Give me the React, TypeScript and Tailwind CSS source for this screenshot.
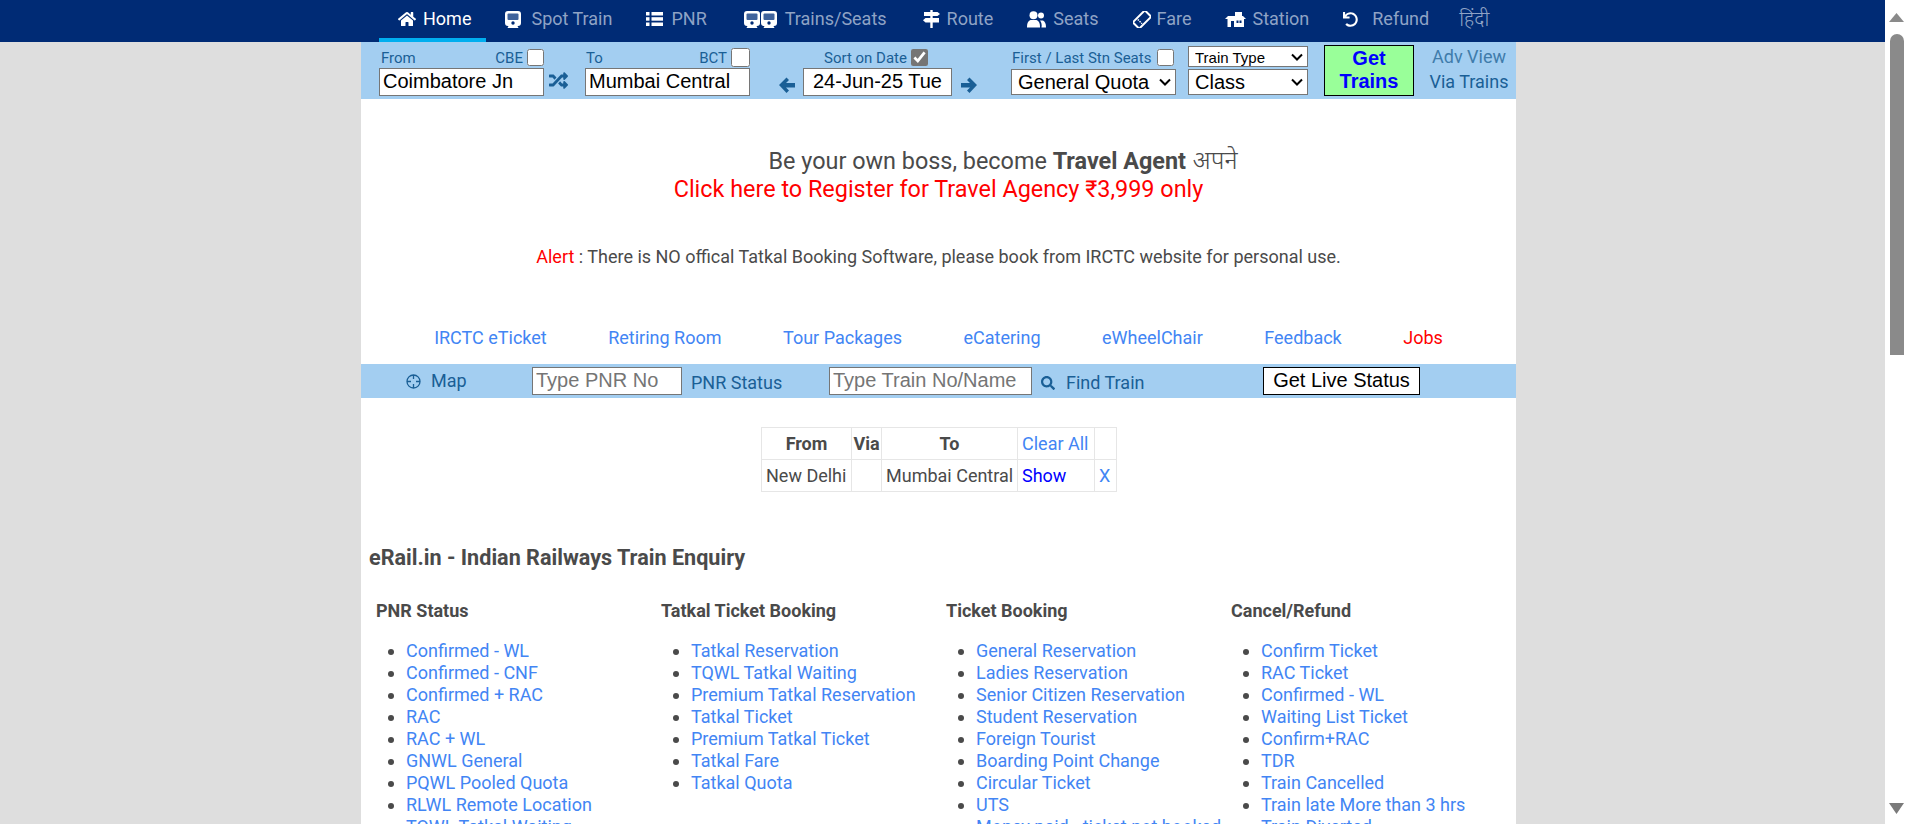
import React from "react";
import { FaHome, FaRandom, FaSearch, FaUndo } from "react-icons/fa";

const roboto = "font-['Roboto',sans-serif]";
const arial = "font-['Liberation_Sans',Arial,sans-serif]";
const hindi = "font-['Noto_Sans','DejaVu_Sans',sans-serif]";
const navBlue = "#002b75";

function TrainIcon() {
  return (
    <svg width="16" height="17" viewBox="0 0 16 17" fill="white">
      <path d="M3 0H13a3 3 0 0 1 3 3V12a3 3 0 0 1-3 3H12.5l1 2H2.5l1-2H3a3 3 0 0 1-3-3V3a3 3 0 0 1 3-3z" />
      <rect x="2.5" y="2.5" width="11" height="6.5" rx="1" fill="#3f639c" />
      <circle cx="8" cy="12" r="1.7" fill={navBlue} />
    </svg>
  );
}

function ListIcon() {
  return (
    <svg width="17" height="14" viewBox="0 0 17 14" fill="white">
      <rect width="3.5" height="3.5" />
      <rect x="5.5" width="11.5" height="3.5" />
      <rect y="5.2" width="3.5" height="3.5" />
      <rect x="5.5" y="5.2" width="11.5" height="3.5" />
      <rect y="10.5" width="3.5" height="3.5" />
      <rect x="5.5" y="10.5" width="11.5" height="3.5" />
    </svg>
  );
}

function RouteIcon() {
  return (
    <svg width="17" height="18" viewBox="0 0 17 18" fill="white">
      <rect x="7.3" width="2.4" height="18" />
      <path d="M1 2H14.5L17 4L14.5 6H1z" />
      <path d="M2.5 8H16V12.5H2.5L0 10.2z" />
    </svg>
  );
}

function SeatsIcon() {
  return (
    <svg width="19" height="17" viewBox="0 0 19 17" fill="white">
      <circle cx="6.5" cy="4.2" r="4" />
      <path d="M0 16.5c0-4.5 1-6.5 3.5-7.5h6c2.5 1 3.5 3 3.5 7.5z" />
      <circle cx="14" cy="4.6" r="3" />
      <path d="M14.5 16.5H19c0-4-1-6-3-7h-3c1.5 2 2 4 1.500 7z" />
    </svg>
  );
}

function TicketIcon() {
  return (
    <svg width="18" height="17" viewBox="0 0 18 17" fill="none" stroke="white">
      <g transform="rotate(-45 9 8.5)">
        <rect x="0.5" y="4" width="17" height="9" rx="1" strokeWidth="2" />
        <path d="M6 5.500V11.500" strokeWidth="1.500" strokeDasharray="1.500 1" />
      </g>
    </svg>
  );
}

function StationIcon() {
  return (
    <svg width="21" height="15" viewBox="0 0 21 15" fill="white">
      <rect x="10" width="7" height="4" />
      <path d="M3 4H18L21 7H0z" />
      <rect x="2.5" y="7" width="16.500" height="8" />
      <rect x="6" y="9" width="3" height="6" fill={navBlue} />
      <rect x="11.500" y="8.500" width="2" height="2.500" fill={navBlue} />
      <rect x="14.500" y="8.500" width="2" height="2.500" fill={navBlue} />
    </svg>
  );
}

function ArrowLeft() {
  return (
    <svg width="16" height="16" viewBox="0 0 16 16" fill="currentColor">
      <path d="M0 8L7.500 0.500L10 3L7 6H16V10.500H7L10 13.500L7.500 16z" />
    </svg>
  );
}

function ArrowRight() {
  return (
    <svg width="16" height="16" viewBox="0 0 16 16" fill="currentColor">
      <path d="M16 8L8.500 0.500L6 3L9 6H0V10.500H9L6 13.500L8.500 16z" />
    </svg>
  );
}

function MapIcon() {
  return (
    <svg width="15" height="15" viewBox="0 0 15 15" fill="none" stroke="currentColor" strokeWidth="1.300">
      <circle cx="7.500" cy="7.500" r="6.500" />
      <path d="M7.500 1V5M7.500 10V14M1 7.500H5M10 7.500H14" />
    </svg>
  );
}

const navItems: { label: string; icon: React.ReactNode; cls: string; active?: boolean }[] = [
  { label: "Home", icon: <FaHome size={18} />, cls: "gap-[7px] pr-[15px]", active: true },
  { label: "Spot Train", icon: <TrainIcon />, cls: "gap-[10px] pr-[15px]" },
  { label: "PNR", icon: <ListIcon />, cls: "gap-[8px] pr-[18px]" },
  {
    label: "Trains/Seats",
    icon: (
      <span className="flex gap-[1px]">
        <TrainIcon />
        <TrainIcon />
      </span>
    ),
    cls: "gap-[8px] pr-[17px]",
  },
  { label: "Route", icon: <RouteIcon />, cls: "gap-[7px] pr-[15px]" },
  { label: "Seats", icon: <SeatsIcon />, cls: "gap-[7px] pr-[15px]" },
  { label: "Fare", icon: <TicketIcon />, cls: "gap-[6px] pr-[15px]" },
  { label: "Station", icon: <StationIcon />, cls: "gap-[6px] pr-[15px]" },
  { label: "Refund", icon: <FaUndo size={15} />, cls: "gap-[14px] pr-[15px]" },
];

const topLinks = ["IRCTC eTicket", "Retiring Room", "Tour Packages", "eCatering", "eWheelChair", "Feedback"];

const columns = [
  {
    title: "PNR Status",
    items: ["Confirmed - WL", "Confirmed - CNF", "Confirmed + RAC", "RAC", "RAC + WL", "GNWL General", "PQWL Pooled Quota", "RLWL Remote Location", "TQWL Tatkal Waiting"],
  },
  {
    title: "Tatkal Ticket Booking",
    items: ["Tatkal Reservation", "TQWL Tatkal Waiting", "Premium Tatkal Reservation", "Tatkal Ticket", "Premium Tatkal Ticket", "Tatkal Fare", "Tatkal Quota"],
  },
  {
    title: "Ticket Booking",
    items: ["General Reservation", "Ladies Reservation", "Senior Citizen Reservation", "Student Reservation", "Foreign Tourist", "Boarding Point Change", "Circular Ticket", "UTS", "Money paid - ticket not booked"],
  },
  {
    title: "Cancel/Refund",
    items: ["Confirm Ticket", "RAC Ticket", "Confirmed - WL", "Waiting List Ticket", "Confirm+RAC", "TDR", "Train Cancelled", "Train late More than 3 hrs", "Train Diverted"],
  },
];

function Check({ checked, big }: { checked?: boolean; big?: boolean }) {
  return (
    <input
      type="checkbox"
      defaultChecked={checked}
      className={`${big ? "w-[19px] h-[19px]" : "w-[17px] h-[17px]"} m-0 shrink-0 accent-[#757575]`}
    />
  );
}

function Select({ label, cls }: { label: string; cls: string }) {
  return (
    <div className={`relative ${cls}`}>
      <select className={`${arial} block w-full h-full appearance-none bg-white border border-[#767676] rounded-none pl-[6px] text-black`}>
        <option>{label}</option>
      </select>
      <svg width="12" height="8" viewBox="0 0 12 8" fill="none" stroke="black" strokeWidth="2" className="absolute right-[5px] top-1/2 -translate-y-1/2 pointer-events-none">
        <path d="M1 1.500L6 6.500L11 1.500" />
      </svg>
    </div>
  );
}

export default function App() {
  return (
    <div className={`flex h-[824px] overflow-hidden bg-[#dedede] ${roboto} text-[18px] leading-[22px] text-[#4a4a4a]`}>
      <div className="w-[1885px] shrink-0 flex flex-col items-start">
        <nav className="w-full h-[42px] shrink-0 bg-[#002b75] flex pl-[379px] text-[#8fa3c5]">
          {navItems.map((n) => (
            <div
              key={n.label}
              className={`h-[42px] shrink-0 flex items-center pl-[19px] ${n.cls} ${
                n.active ? "text-white border-b-[4px] border-[#00aeef]" : "border-b-[4px] border-transparent"
              }`}
            >
              <span className="text-white flex">{n.icon}</span>
              <span>{n.label}</span>
            </div>
          ))}
          <div className={`h-[38px] pl-[15px] flex items-center text-[20px] font-light ${hindi}`}>हिंदी</div>
        </nav>

        <main className="ml-[361px] w-[1155px] shrink-0 bg-white">
          <form className="h-[57px] bg-[#a3cef1] flex pl-[18px] text-[15px] text-[#1a5f96]">
            <div className="w-[165px] pt-[5px]">
              <div className="h-[21px] flex items-center justify-between pl-[2px]">
                <span>From</span>
                <span className="flex items-center gap-[4px]">CBE <Check /></span>
              </div>
              <input readOnly value="Coimbatore Jn" className={`${arial} w-[165px] h-[28px] pb-[2px] bg-white border border-[#767676] text-black text-[20px] px-[3px]`} />
            </div>
            <div className="w-[41px] pt-[29px] pl-[5px]"><FaRandom size={19} /></div>
            <div className="w-[165px] pt-[5px]">
              <div className="h-[21px] flex items-center justify-between pl-[1px]">
                <span>To</span>
                <span className="flex items-center gap-[4px]">BCT <Check big /></span>
              </div>
              <input readOnly value="Mumbai Central" className={`${arial} w-[165px] h-[28px] pb-[2px] bg-white border border-[#767676] text-black text-[20px] px-[3px]`} />
            </div>
            <div className="w-[53px] pt-[35px] pl-[29px]"><ArrowLeft /></div>
            <div className="w-[149px] pt-[5px]">
              <div className="h-[21px] flex items-center justify-center gap-[4px] pr-[3px] whitespace-nowrap">Sort on Date <Check checked /></div>
              <input readOnly value="24-Jun-25 Tue" className={`${arial} w-[149px] h-[28px] pb-[2px] bg-white border border-[#767676] text-black text-[20px] text-center`} />
            </div>
            <div className="w-[59px] pt-[35px] pl-[9px]"><ArrowRight /></div>
            <div className="w-[177px] pt-[5px]">
              <div className="h-[21px] flex items-center gap-[6px] pl-[1px] w-[165px] whitespace-nowrap">
                <span>First / Last Stn Seats</span>
                <Check />
              </div>
              <Select label="General Quota" cls="mt-[1px] w-[165px] h-[26px] text-[20px]" />
            </div>
            <div className="w-[136px] pt-[4px]">
              <Select label="Train Type" cls="w-[120px] h-[21px] text-[15px]" />
              <Select label="Class" cls="mt-[2px] w-[120px] h-[26px] text-[20px]" />
            </div>
            <div className="w-[90px] pt-[3px]">
              <button type="button" className={`${arial} w-[90px] h-[51px] pb-[2px] bg-[#99ff99] border border-black text-[#0000ff] font-bold text-[20px] leading-[23px]`}>
                Get<br />Trains
              </button>
            </div>
            <div className="flex-1 flex flex-col items-center pl-[8px] pt-[2px] text-[18px] leading-[25px] whitespace-nowrap">
              <span className="text-[#3f7cab]">Adv View</span>
              <span>Via Trains</span>
            </div>
          </form>

          <div className="h-[265px] flex flex-col">
            <div className="pt-[46px] text-[23.4px] leading-[28px] text-center">
              <div className="pl-[129px] h-[30px]">
                Be your own boss, become <b>Travel Agent</b> <span className={`${hindi} font-light text-[25px] ml-[1px]`}>अपने</span>
              </div>
              <div className="text-[#ff0000]">Click here to Register for Travel Agency ₹3,999 only</div>
            </div>
            <p className="mt-[43px] text-center">
              <span className="text-[#ff0000]">Alert</span> : There is NO offical Tatkal Booking Software, please book from IRCTC website for personal use.
            </p>
            <div className="mt-[59px] flex justify-center gap-[61.5px] text-[#4285f4]">
              {topLinks.map((l) => (
                <span key={l}>{l}</span>
              ))}
              <span className="text-[#ff0000]">Jobs</span>
            </div>
          </div>

          <div className="h-[34px] bg-[#a3cef1] flex items-center pl-[45px] text-[#1a5f96]">
            <MapIcon />
            <span className="ml-[10px] w-[101px]">Map</span>
            <input placeholder="Type PNR No" className={`${arial} w-[150px] h-[28px] pb-[2px] bg-white border border-[#767676] text-[20px] px-[3px] placeholder:text-[#757575]`} />
            <span className="ml-[9px] w-[138px] pt-[4px]">PNR Status</span>
            <input placeholder="Type Train No/Name" className={`${arial} w-[203px] h-[28px] pb-[2px] bg-white border border-[#767676] text-[20px] px-[3px] placeholder:text-[#757575]`} />
            <FaSearch size={14} className="ml-[9px] mt-[4px]" />
            <span className="ml-[11px] w-[197px] pt-[4px]">Find Train</span>
            <button type="button" className={`${arial} w-[157px] h-[28px] pb-[2px] bg-white border border-black text-black text-[20px]`}>Get Live Status</button>
          </div>

          <table className="mt-[29px] ml-[400px] border-collapse w-[355px] table-fixed">
            <tbody>
              <tr className="h-[32px] font-bold text-center">
                <td className="border border-[#e6e6e6] w-[90px]">From</td>
                <td className="border border-[#e6e6e6] w-[30px]">Via</td>
                <td className="border border-[#e6e6e6] w-[136px]">To</td>
                <td className="border border-[#e6e6e6] w-[77px] font-normal text-left pl-[4px] text-[#4285f4] whitespace-nowrap">Clear All</td>
                <td className="border border-[#e6e6e6] w-[22px]"></td>
              </tr>
              <tr className="h-[32px]">
                <td className="border border-[#e6e6e6] pl-[4px] whitespace-nowrap">New Delhi</td>
                <td className="border border-[#e6e6e6]"></td>
                <td className="border border-[#e6e6e6] pl-[4px] whitespace-nowrap">Mumbai Central</td>
                <td className="border border-[#e6e6e6] pl-[4px] text-[#0000ff]">Show</td>
                <td className="border border-[#e6e6e6] pl-[4px] text-[#4285f4]">X</td>
              </tr>
            </tbody>
          </table>

          <h1 className="mt-[52px] pl-[8px] text-[21.6px] leading-[28px] font-bold">eRail.in - Indian Railways Train Enquiry</h1>

          <div className="mt-[28px] pl-[15px] flex">
            {columns.map((c) => (
              <div key={c.title} className="w-[285px] shrink-0">
                <h2 className="font-bold">{c.title}</h2>
                <ul className="mt-[18px] pl-[30px] list-disc text-[#4285f4] marker:text-[#4a4a4a]">
                  {c.items.map((i) => (
                    <li key={i} className="whitespace-nowrap">{i}</li>
                  ))}
                </ul>
              </div>
            ))}
          </div>
        </main>
      </div>

      <div className="flex-1 bg-white flex flex-col items-center relative">
        <svg width="15" height="9" viewBox="0 0 15 9" className="mt-[13px] shrink-0"><path d="M7.500 0L15 9H0z" fill="#8a8a8a" /></svg>
        <div className="w-[14px] h-[321px] mt-[12px] bg-[#8a8a8a] rounded-t-[7px] shrink-0" />
        <svg width="15" height="11" viewBox="0 0 15 11" className="absolute bottom-[10px]"><path d="M0 0H15L7.500 11z" fill="#7a7a7a" /></svg>
      </div>
    </div>
  );
}
